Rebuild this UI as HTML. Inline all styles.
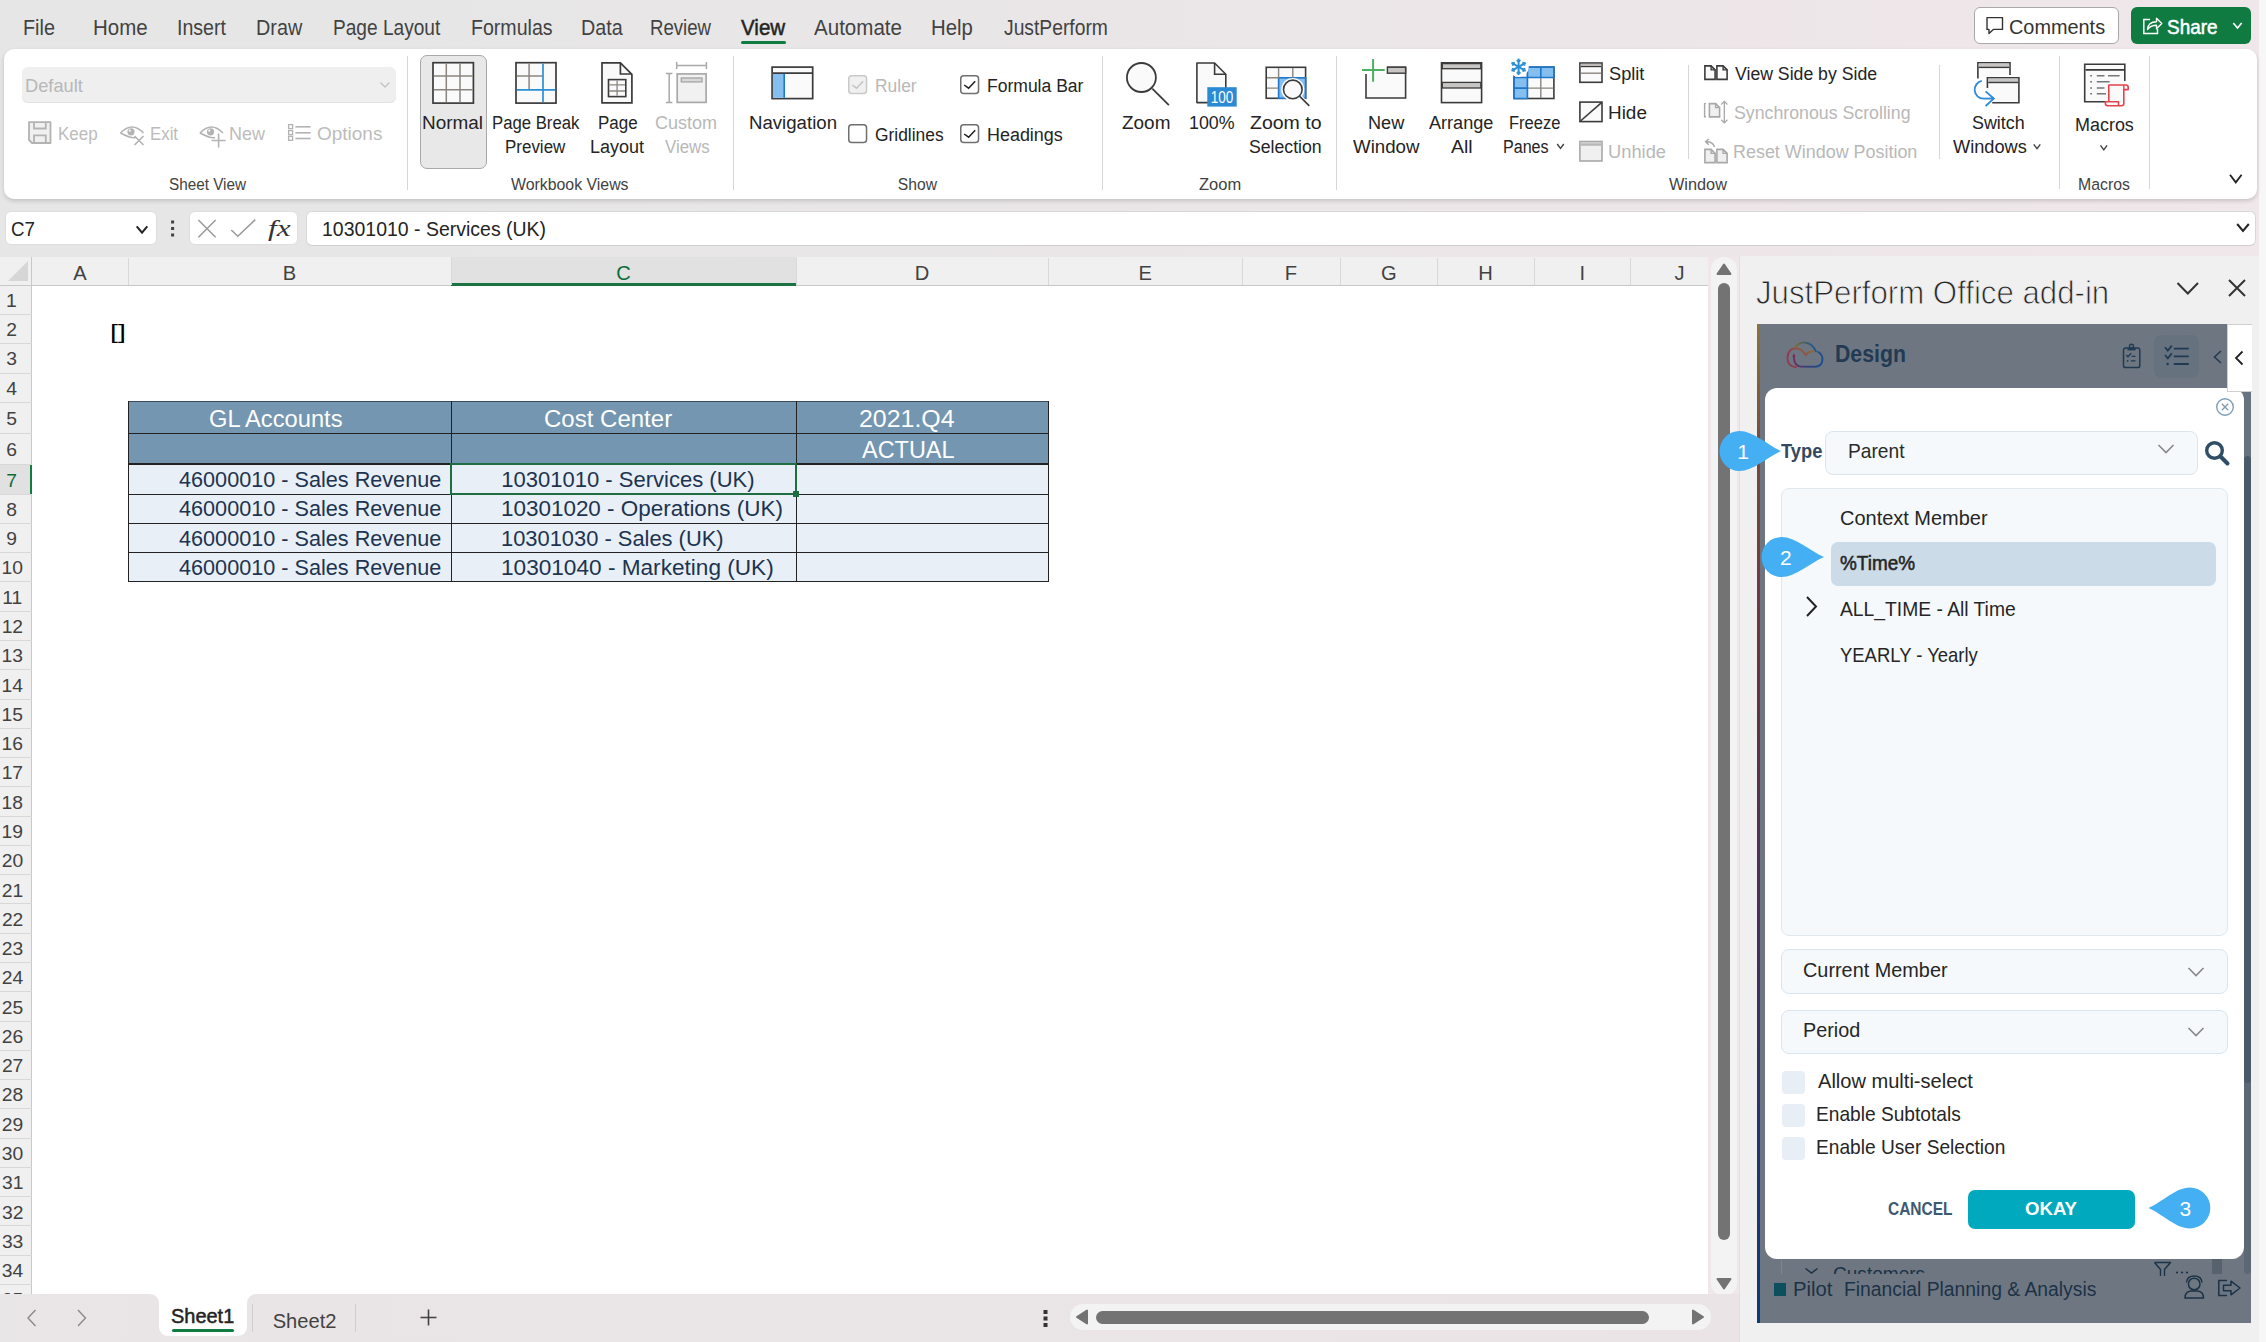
<!DOCTYPE html><html><head><meta charset="utf-8"><style>
*{margin:0;padding:0}
html,body{width:2266px;height:1342px;overflow:hidden;position:relative;font-family:'Liberation Sans',sans-serif}
.t{position:absolute;white-space:nowrap;transform-origin:0 0}
.r{position:absolute}
.s{position:absolute;overflow:visible}
</style></head><body><div class="r" style="left:0.00px;top:0.00px;width:2266.00px;height:1342.00px;background:linear-gradient(90deg,#e6e6e6 0%,#e8e6e7 35%,#ede6e9 70%,#efe7ea 100%)"></div>
<div class="r" style="left:2259.00px;top:0.00px;width:7.00px;height:1342.00px;background:#f7f7f7"></div>
<div class="t" style="left:23.42px;top:17.11px;font-size:21.16px;line-height:21.16px;color:#424242;transform:scaleX(0.9357);">File</div>
<div class="t" style="left:93.36px;top:17.11px;font-size:21.16px;line-height:21.16px;color:#424242;transform:scaleX(0.9675);">Home</div>
<div class="t" style="left:177.44px;top:17.11px;font-size:21.16px;line-height:21.16px;color:#424242;transform:scaleX(0.9256);">Insert</div>
<div class="t" style="left:256.41px;top:17.11px;font-size:21.16px;line-height:21.16px;color:#424242;transform:scaleX(0.9368);">Draw</div>
<div class="t" style="left:332.57px;top:17.11px;font-size:21.16px;line-height:21.16px;color:#424242;transform:scaleX(0.9025);">Page Layout</div>
<div class="t" style="left:470.63px;top:17.11px;font-size:21.16px;line-height:21.16px;color:#424242;transform:scaleX(0.9254);">Formulas</div>
<div class="t" style="left:580.52px;top:17.11px;font-size:21.16px;line-height:21.16px;color:#424242;transform:scaleX(0.9336);">Data</div>
<div class="t" style="left:650.41px;top:17.11px;font-size:21.16px;line-height:21.16px;color:#424242;transform:scaleX(0.8802);">Review</div>
<div class="t" style="left:814.40px;top:17.11px;font-size:21.16px;line-height:21.16px;color:#424242;transform:scaleX(0.9720);">Automate</div>
<div class="t" style="left:931.08px;top:17.11px;font-size:21.16px;line-height:21.16px;color:#424242;transform:scaleX(0.9599);">Help</div>
<div class="t" style="left:1003.91px;top:17.11px;font-size:21.16px;line-height:21.16px;color:#424242;transform:scaleX(0.9114);">JustPerform</div>
<div class="t" style="left:741.10px;top:17.11px;font-size:21.16px;line-height:21.16px;color:#242424;transform:scaleX(0.9716);-webkit-text-stroke:0.5px #242424">View</div>
<div class="r" style="left:741.00px;top:40.50px;width:45.00px;height:3.00px;background:#107c41;border-radius:2px"></div>
<div class="r" style="left:1973.50px;top:7.00px;width:145.00px;height:36.50px;background:#fff;border:1px solid #a9a9a9;border-radius:6px;box-sizing:border-box"></div>
<div class="t" style="left:2009.21px;top:16.50px;font-size:20.00px;line-height:20.00px;color:#333;transform:scaleX(0.9937);">Comments</div>
<div class="r" style="left:2130.80px;top:7.00px;width:119.90px;height:36.50px;background:#0f7b41;border-radius:6px"></div>
<div class="t" style="left:2166.65px;top:16.50px;font-size:20.00px;line-height:20.00px;color:#fff;transform:scaleX(0.9476);-webkit-text-stroke:0.5px #fff">Share</div>
<div class="r" style="left:3.70px;top:48.50px;width:2252.90px;height:150.50px;background:#fff;border-radius:10px;box-shadow:0 2px 4px rgba(0,0,0,0.16)"></div>
<div class="r" style="left:406.90px;top:56.00px;width:1.00px;height:133.60px;background:#d6d6d6"></div>
<div class="r" style="left:732.90px;top:56.00px;width:1.00px;height:133.60px;background:#d6d6d6"></div>
<div class="r" style="left:1102.10px;top:56.00px;width:1.00px;height:133.60px;background:#d6d6d6"></div>
<div class="r" style="left:1336.40px;top:56.00px;width:1.00px;height:133.60px;background:#d6d6d6"></div>
<div class="r" style="left:1688.00px;top:65.00px;width:1.00px;height:93.70px;background:#d6d6d6"></div>
<div class="r" style="left:1939.00px;top:65.00px;width:1.00px;height:93.80px;background:#d6d6d6"></div>
<div class="r" style="left:2059.00px;top:55.70px;width:1.00px;height:133.70px;background:#d6d6d6"></div>
<div class="r" style="left:2149.00px;top:55.70px;width:1.00px;height:133.70px;background:#d6d6d6"></div>
<div class="r" style="left:22.00px;top:67.00px;width:374.00px;height:35.50px;background:#efefef;border-radius:6px;box-shadow:inset 0 -1px 0 #e2e2e2"></div>
<div class="t" style="left:24.84px;top:76.99px;font-size:18.84px;line-height:18.84px;color:#b8b8b8;transform:scaleX(0.9685);">Default</div>
<div class="t" style="left:57.94px;top:125.19px;font-size:18.84px;line-height:18.84px;color:#bcbcbc;transform:scaleX(0.9010);">Keep</div>
<div class="t" style="left:149.65px;top:125.19px;font-size:18.84px;line-height:18.84px;color:#bcbcbc;transform:scaleX(0.8936);">Exit</div>
<div class="t" style="left:229.36px;top:125.19px;font-size:18.84px;line-height:18.84px;color:#bcbcbc;transform:scaleX(0.9540);">New</div>
<div class="t" style="left:317.05px;top:125.19px;font-size:18.84px;line-height:18.84px;color:#bcbcbc;transform:scaleX(1.0079);">Options</div>
<div class="t" style="left:169.31px;top:177.00px;font-size:15.65px;line-height:15.65px;color:#424242;transform:scaleX(0.9775);">Sheet View</div>
<div class="r" style="left:420.30px;top:54.80px;width:66.30px;height:114.70px;background:#e8e8e8;border:1px solid #a9a9a9;border-radius:7px;box-sizing:border-box"></div>
<div class="t" style="left:422.49px;top:114.06px;font-size:18.41px;line-height:18.41px;color:#242424;transform:scaleX(1.0283);">Normal</div>
<div class="t" style="left:491.96px;top:114.06px;font-size:18.41px;line-height:18.41px;color:#242424;transform:scaleX(0.9082);">Page Break</div>
<div class="t" style="left:505.44px;top:138.06px;font-size:18.41px;line-height:18.41px;color:#242424;transform:scaleX(0.9211);">Preview</div>
<div class="t" style="left:598.14px;top:114.06px;font-size:18.41px;line-height:18.41px;color:#242424;transform:scaleX(0.9219);">Page</div>
<div class="t" style="left:589.86px;top:138.06px;font-size:18.41px;line-height:18.41px;color:#242424;transform:scaleX(0.9785);">Layout</div>
<div class="t" style="left:654.90px;top:114.06px;font-size:18.41px;line-height:18.41px;color:#b8b8b8;transform:scaleX(0.9789);">Custom</div>
<div class="t" style="left:664.72px;top:138.06px;font-size:18.41px;line-height:18.41px;color:#b8b8b8;transform:scaleX(0.9159);">Views</div>
<div class="t" style="left:510.92px;top:177.20px;font-size:15.65px;line-height:15.65px;color:#424242;transform:scaleX(1.0142);">Workbook Views</div>
<div class="t" style="left:748.51px;top:113.86px;font-size:18.41px;line-height:18.41px;color:#242424;transform:scaleX(1.0119);">Navigation</div>
<div class="t" style="left:874.51px;top:77.06px;font-size:18.41px;line-height:18.41px;color:#b8b8b8;transform:scaleX(0.9466);">Ruler</div>
<div class="t" style="left:875.03px;top:125.66px;font-size:18.41px;line-height:18.41px;color:#242424;transform:scaleX(0.9445);">Gridlines</div>
<div class="t" style="left:986.90px;top:77.06px;font-size:18.41px;line-height:18.41px;color:#242424;transform:scaleX(0.9519);">Formula Bar</div>
<div class="t" style="left:986.87px;top:125.66px;font-size:18.41px;line-height:18.41px;color:#242424;transform:scaleX(0.9743);">Headings</div>
<div class="t" style="left:897.80px;top:177.00px;font-size:15.65px;line-height:15.65px;color:#424242;">Show</div>
<div class="t" style="left:1122.13px;top:113.66px;font-size:18.41px;line-height:18.41px;color:#242424;transform:scaleX(1.0293);">Zoom</div>
<div class="t" style="left:1188.96px;top:113.66px;font-size:18.41px;line-height:18.41px;color:#242424;transform:scaleX(0.9691);">100%</div>
<div class="t" style="left:1249.62px;top:113.66px;font-size:18.41px;line-height:18.41px;color:#242424;transform:scaleX(1.0594);">Zoom to</div>
<div class="t" style="left:1249.41px;top:137.66px;font-size:18.41px;line-height:18.41px;color:#242424;transform:scaleX(0.9591);">Selection</div>
<div class="t" style="left:1198.50px;top:177.00px;font-size:15.65px;line-height:15.65px;color:#424242;transform:scaleX(1.0549);">Zoom</div>
<div class="t" style="left:1367.55px;top:113.66px;font-size:18.41px;line-height:18.41px;color:#242424;transform:scaleX(0.9850);">New</div>
<div class="t" style="left:1352.61px;top:137.66px;font-size:18.41px;line-height:18.41px;color:#242424;transform:scaleX(1.0148);">Window</div>
<div class="t" style="left:1429.30px;top:113.66px;font-size:18.41px;line-height:18.41px;color:#242424;transform:scaleX(0.9829);">Arrange</div>
<div class="t" style="left:1451.20px;top:137.66px;font-size:18.41px;line-height:18.41px;color:#242424;transform:scaleX(1.0554);">All</div>
<div class="t" style="left:1508.68px;top:113.66px;font-size:18.41px;line-height:18.41px;color:#242424;transform:scaleX(0.8991);">Freeze</div>
<div class="t" style="left:1502.91px;top:137.66px;font-size:18.41px;line-height:18.41px;color:#242424;transform:scaleX(0.8729);">Panes</div>
<div class="t" style="left:1608.98px;top:64.56px;font-size:18.41px;line-height:18.41px;color:#242424;transform:scaleX(0.9891);">Split</div>
<div class="t" style="left:1608.29px;top:104.16px;font-size:18.41px;line-height:18.41px;color:#242424;transform:scaleX(1.0275);">Hide</div>
<div class="t" style="left:1608.43px;top:142.76px;font-size:18.41px;line-height:18.41px;color:#b8b8b8;transform:scaleX(0.9940);">Unhide</div>
<div class="t" style="left:1734.51px;top:64.56px;font-size:18.41px;line-height:18.41px;color:#242424;transform:scaleX(0.9595);">View Side by Side</div>
<div class="t" style="left:1733.80px;top:104.16px;font-size:18.41px;line-height:18.41px;color:#b8b8b8;transform:scaleX(0.9640);">Synchronous Scrolling</div>
<div class="t" style="left:1733.17px;top:142.76px;font-size:18.41px;line-height:18.41px;color:#b8b8b8;transform:scaleX(0.9740);">Reset Window Position</div>
<div class="t" style="left:1668.52px;top:177.00px;font-size:15.65px;line-height:15.65px;color:#424242;transform:scaleX(1.0406);">Window</div>
<div class="t" style="left:1972.00px;top:114.06px;font-size:18.41px;line-height:18.41px;color:#242424;transform:scaleX(0.9716);">Switch</div>
<div class="t" style="left:1952.81px;top:137.76px;font-size:18.41px;line-height:18.41px;color:#242424;transform:scaleX(0.9878);">Windows</div>
<div class="t" style="left:2074.86px;top:115.66px;font-size:18.41px;line-height:18.41px;color:#242424;transform:scaleX(0.9750);">Macros</div>
<div class="t" style="left:2077.63px;top:176.80px;font-size:15.65px;line-height:15.65px;color:#424242;transform:scaleX(1.0113);">Macros</div>
<div class="r" style="left:4.80px;top:211.40px;width:151.90px;height:33.90px;background:#fff;border:1px solid #dedede;border-radius:6px;box-sizing:border-box"></div>
<div class="t" style="left:10.96px;top:219.82px;font-size:19.86px;line-height:19.86px;color:#242424;transform:scaleX(0.9430);">C7</div>
<div class="r" style="left:188.50px;top:211.40px;width:109.40px;height:33.90px;background:#fff;border:1px solid #dedede;border-radius:6px;box-sizing:border-box"></div>
<div class="r" style="left:305.80px;top:211.30px;width:1950.60px;height:34.30px;background:#fff;border:1px solid #d8d8d8;border-bottom-color:#cfcfcf;border-radius:6px;box-sizing:border-box"></div>
<div class="t" style="left:322.04px;top:219.82px;font-size:19.86px;line-height:19.86px;color:#242424;transform:scaleX(0.9807);">10301010 - Services (UK)</div>
<div class="r" style="left:0.00px;top:256.50px;width:1708.40px;height:29.00px;background:#f0f0f0"></div>
<div class="r" style="left:0.00px;top:285.00px;width:1708.40px;height:1.00px;background:#c8c8c8"></div>
<div class="r" style="left:0.00px;top:285.50px;width:31.60px;height:1008.50px;background:#f0f0f0"></div>
<div class="r" style="left:31.60px;top:286.00px;width:1676.80px;height:1008.00px;background:#fff"></div>
<div class="r" style="left:31.00px;top:256.50px;width:1.00px;height:1037.50px;background:#c8c8c8"></div>
<div class="r" style="left:451.10px;top:256.50px;width:345.00px;height:29.00px;background:#e1e1e1"></div>
<div class="r" style="left:451.10px;top:283.40px;width:345.00px;height:2.30px;background:#1b7343"></div>
<div class="r" style="left:127.90px;top:258.00px;width:1.00px;height:27.00px;background:#d8d8d8"></div>
<div class="r" style="left:450.60px;top:258.00px;width:1.00px;height:27.00px;background:#d8d8d8"></div>
<div class="r" style="left:795.60px;top:258.00px;width:1.00px;height:27.00px;background:#d8d8d8"></div>
<div class="r" style="left:1048.10px;top:258.00px;width:1.00px;height:27.00px;background:#d8d8d8"></div>
<div class="r" style="left:1242.30px;top:258.00px;width:1.00px;height:27.00px;background:#d8d8d8"></div>
<div class="r" style="left:1339.50px;top:258.00px;width:1.00px;height:27.00px;background:#d8d8d8"></div>
<div class="r" style="left:1436.50px;top:258.00px;width:1.00px;height:27.00px;background:#d8d8d8"></div>
<div class="r" style="left:1533.50px;top:258.00px;width:1.00px;height:27.00px;background:#d8d8d8"></div>
<div class="r" style="left:1630.10px;top:258.00px;width:1.00px;height:27.00px;background:#d8d8d8"></div>
<div class="t" style="left:73.30px;top:263.28px;font-size:20.14px;line-height:20.14px;color:#424242;">A</div>
<div class="t" style="left:282.75px;top:263.28px;font-size:20.14px;line-height:20.14px;color:#424242;">B</div>
<div class="t" style="left:616.20px;top:263.28px;font-size:20.14px;line-height:20.14px;color:#0e6b38;">C</div>
<div class="t" style="left:914.75px;top:263.28px;font-size:20.14px;line-height:20.14px;color:#424242;">D</div>
<div class="t" style="left:1138.60px;top:263.28px;font-size:20.14px;line-height:20.14px;color:#424242;">E</div>
<div class="t" style="left:1284.85px;top:263.28px;font-size:20.14px;line-height:20.14px;color:#424242;">F</div>
<div class="t" style="left:1380.90px;top:263.28px;font-size:20.14px;line-height:20.14px;color:#424242;">G</div>
<div class="t" style="left:1478.25px;top:263.28px;font-size:20.14px;line-height:20.14px;color:#424242;">H</div>
<div class="t" style="left:1579.53px;top:263.28px;font-size:20.14px;line-height:20.14px;color:#424242;">I</div>
<div class="t" style="left:1674.57px;top:263.28px;font-size:20.14px;line-height:20.14px;color:#424242;">J</div>
<svg class="s" style="left:8.00px;top:261.00px;" width="21" height="21" viewBox="0 0 21 21"><path d="M20 0 L20 20 L0 20 Z" fill="#d6d6d6"/></svg>
<div class="r" style="left:0.00px;top:464.40px;width:31.60px;height:29.80px;background:#e1e1e1"></div>
<div class="r" style="left:29.60px;top:464.40px;width:2.20px;height:29.80px;background:#107c41"></div>
<div class="r" style="left:0.00px;top:314.20px;width:31.60px;height:1.00px;background:#d8d8d8"></div>
<div class="r" style="left:0.00px;top:342.80px;width:31.60px;height:1.00px;background:#d8d8d8"></div>
<div class="r" style="left:0.00px;top:372.70px;width:31.60px;height:1.00px;background:#d8d8d8"></div>
<div class="r" style="left:0.00px;top:402.30px;width:31.60px;height:1.00px;background:#d8d8d8"></div>
<div class="r" style="left:0.00px;top:433.00px;width:31.60px;height:1.00px;background:#d8d8d8"></div>
<div class="r" style="left:0.00px;top:463.90px;width:31.60px;height:1.00px;background:#d8d8d8"></div>
<div class="r" style="left:0.00px;top:493.70px;width:31.60px;height:1.00px;background:#d8d8d8"></div>
<div class="r" style="left:0.00px;top:522.90px;width:31.60px;height:1.00px;background:#d8d8d8"></div>
<div class="r" style="left:0.00px;top:552.10px;width:31.60px;height:1.00px;background:#d8d8d8"></div>
<div class="r" style="left:0.00px;top:581.40px;width:31.60px;height:1.00px;background:#d8d8d8"></div>
<div class="r" style="left:0.00px;top:610.67px;width:31.60px;height:1.00px;background:#d8d8d8"></div>
<div class="r" style="left:0.00px;top:639.95px;width:31.60px;height:1.00px;background:#d8d8d8"></div>
<div class="r" style="left:0.00px;top:669.22px;width:31.60px;height:1.00px;background:#d8d8d8"></div>
<div class="r" style="left:0.00px;top:698.50px;width:31.60px;height:1.00px;background:#d8d8d8"></div>
<div class="r" style="left:0.00px;top:727.77px;width:31.60px;height:1.00px;background:#d8d8d8"></div>
<div class="r" style="left:0.00px;top:757.05px;width:31.60px;height:1.00px;background:#d8d8d8"></div>
<div class="r" style="left:0.00px;top:786.32px;width:31.60px;height:1.00px;background:#d8d8d8"></div>
<div class="r" style="left:0.00px;top:815.60px;width:31.60px;height:1.00px;background:#d8d8d8"></div>
<div class="r" style="left:0.00px;top:844.87px;width:31.60px;height:1.00px;background:#d8d8d8"></div>
<div class="r" style="left:0.00px;top:874.15px;width:31.60px;height:1.00px;background:#d8d8d8"></div>
<div class="r" style="left:0.00px;top:903.42px;width:31.60px;height:1.00px;background:#d8d8d8"></div>
<div class="r" style="left:0.00px;top:932.70px;width:31.60px;height:1.00px;background:#d8d8d8"></div>
<div class="r" style="left:0.00px;top:961.97px;width:31.60px;height:1.00px;background:#d8d8d8"></div>
<div class="r" style="left:0.00px;top:991.25px;width:31.60px;height:1.00px;background:#d8d8d8"></div>
<div class="r" style="left:0.00px;top:1020.52px;width:31.60px;height:1.00px;background:#d8d8d8"></div>
<div class="r" style="left:0.00px;top:1049.80px;width:31.60px;height:1.00px;background:#d8d8d8"></div>
<div class="r" style="left:0.00px;top:1079.07px;width:31.60px;height:1.00px;background:#d8d8d8"></div>
<div class="r" style="left:0.00px;top:1108.35px;width:31.60px;height:1.00px;background:#d8d8d8"></div>
<div class="r" style="left:0.00px;top:1137.62px;width:31.60px;height:1.00px;background:#d8d8d8"></div>
<div class="r" style="left:0.00px;top:1166.90px;width:31.60px;height:1.00px;background:#d8d8d8"></div>
<div class="r" style="left:0.00px;top:1196.18px;width:31.60px;height:1.00px;background:#d8d8d8"></div>
<div class="r" style="left:0.00px;top:1225.45px;width:31.60px;height:1.00px;background:#d8d8d8"></div>
<div class="r" style="left:0.00px;top:1254.73px;width:31.60px;height:1.00px;background:#d8d8d8"></div>
<div class="r" style="left:0.00px;top:1284.00px;width:31.60px;height:1.00px;background:#d8d8d8"></div>
<div class="t" style="left:5.96px;top:291.32px;font-size:19.28px;line-height:19.28px;color:#424242;">1</div>
<div class="t" style="left:6.25px;top:320.22px;font-size:19.28px;line-height:19.28px;color:#424242;">2</div>
<div class="t" style="left:6.25px;top:349.47px;font-size:19.28px;line-height:19.28px;color:#424242;">3</div>
<div class="t" style="left:6.35px;top:379.22px;font-size:19.28px;line-height:19.28px;color:#424242;">4</div>
<div class="t" style="left:6.25px;top:409.37px;font-size:19.28px;line-height:19.28px;color:#424242;">5</div>
<div class="t" style="left:6.15px;top:440.17px;font-size:19.28px;line-height:19.28px;color:#424242;">6</div>
<div class="t" style="left:6.25px;top:470.52px;font-size:19.28px;line-height:19.28px;color:#0e6b38;">7</div>
<div class="t" style="left:6.20px;top:500.02px;font-size:19.28px;line-height:19.28px;color:#424242;">8</div>
<div class="t" style="left:6.25px;top:529.22px;font-size:19.28px;line-height:19.28px;color:#424242;">9</div>
<div class="t" style="left:1.52px;top:558.47px;font-size:19.28px;line-height:19.28px;color:#424242;">10</div>
<div class="t" style="left:2.34px;top:587.75px;font-size:19.28px;line-height:19.28px;color:#424242;">11</div>
<div class="t" style="left:1.66px;top:617.03px;font-size:19.28px;line-height:19.28px;color:#424242;">12</div>
<div class="t" style="left:1.56px;top:646.30px;font-size:19.28px;line-height:19.28px;color:#424242;">13</div>
<div class="t" style="left:1.47px;top:675.58px;font-size:19.28px;line-height:19.28px;color:#424242;">14</div>
<div class="t" style="left:1.56px;top:704.85px;font-size:19.28px;line-height:19.28px;color:#424242;">15</div>
<div class="t" style="left:1.56px;top:734.13px;font-size:19.28px;line-height:19.28px;color:#424242;">16</div>
<div class="t" style="left:1.66px;top:763.40px;font-size:19.28px;line-height:19.28px;color:#424242;">17</div>
<div class="t" style="left:1.56px;top:792.68px;font-size:19.28px;line-height:19.28px;color:#424242;">18</div>
<div class="t" style="left:1.61px;top:821.95px;font-size:19.28px;line-height:19.28px;color:#424242;">19</div>
<div class="t" style="left:1.76px;top:851.23px;font-size:19.28px;line-height:19.28px;color:#424242;">20</div>
<div class="t" style="left:1.85px;top:880.50px;font-size:19.28px;line-height:19.28px;color:#424242;">21</div>
<div class="t" style="left:1.90px;top:909.78px;font-size:19.28px;line-height:19.28px;color:#424242;">22</div>
<div class="t" style="left:1.81px;top:939.05px;font-size:19.28px;line-height:19.28px;color:#424242;">23</div>
<div class="t" style="left:1.71px;top:968.33px;font-size:19.28px;line-height:19.28px;color:#424242;">24</div>
<div class="t" style="left:1.81px;top:997.60px;font-size:19.28px;line-height:19.28px;color:#424242;">25</div>
<div class="t" style="left:1.81px;top:1026.88px;font-size:19.28px;line-height:19.28px;color:#424242;">26</div>
<div class="t" style="left:1.90px;top:1056.15px;font-size:19.28px;line-height:19.28px;color:#424242;">27</div>
<div class="t" style="left:1.81px;top:1085.43px;font-size:19.28px;line-height:19.28px;color:#424242;">28</div>
<div class="t" style="left:1.85px;top:1114.70px;font-size:19.28px;line-height:19.28px;color:#424242;">29</div>
<div class="t" style="left:1.85px;top:1143.98px;font-size:19.28px;line-height:19.28px;color:#424242;">30</div>
<div class="t" style="left:1.95px;top:1173.25px;font-size:19.28px;line-height:19.28px;color:#424242;">31</div>
<div class="t" style="left:2.00px;top:1202.53px;font-size:19.28px;line-height:19.28px;color:#424242;">32</div>
<div class="t" style="left:1.90px;top:1231.80px;font-size:19.28px;line-height:19.28px;color:#424242;">33</div>
<div class="t" style="left:1.81px;top:1261.08px;font-size:19.28px;line-height:19.28px;color:#424242;">34</div>
<div class="t" style="left:1.90px;top:1290.35px;font-size:19.28px;line-height:19.28px;color:#424242;">35</div>
<div class="t" style="left:109.81px;top:322.97px;font-size:19.57px;line-height:19.57px;color:#000;transform:scaleX(1.4533);">[]</div>
<div class="r" style="left:128.30px;top:401.80px;width:920.30px;height:62.60px;background:#7496b0"></div>
<div class="r" style="left:128.30px;top:464.40px;width:920.30px;height:117.40px;background:#e9eff7"></div>
<div class="r" style="left:127.70px;top:401.20px;width:921.50px;height:1.20px;background:#3a4a58"></div>
<div class="r" style="left:127.70px;top:433.00px;width:921.50px;height:1.20px;background:#222"></div>
<div class="r" style="left:127.70px;top:463.40px;width:921.50px;height:2.00px;background:#222"></div>
<div class="r" style="left:127.70px;top:493.50px;width:921.50px;height:1.20px;background:#222"></div>
<div class="r" style="left:127.70px;top:522.70px;width:921.50px;height:1.20px;background:#222"></div>
<div class="r" style="left:127.70px;top:551.90px;width:921.50px;height:1.20px;background:#222"></div>
<div class="r" style="left:127.70px;top:581.20px;width:921.50px;height:1.20px;background:#222"></div>
<div class="r" style="left:127.70px;top:401.20px;width:1.20px;height:181.20px;background:#222"></div>
<div class="r" style="left:450.50px;top:401.20px;width:1.20px;height:181.20px;background:#222"></div>
<div class="r" style="left:795.50px;top:401.20px;width:1.20px;height:181.20px;background:#222"></div>
<div class="r" style="left:1048.00px;top:401.20px;width:1.20px;height:181.20px;background:#222"></div>
<div class="t" style="left:208.51px;top:406.80px;font-size:24.35px;line-height:24.35px;color:#fff;transform:scaleX(0.9739);">GL Accounts</div>
<div class="t" style="left:544.10px;top:406.90px;font-size:24.35px;line-height:24.35px;color:#fff;transform:scaleX(0.9866);">Cost Center</div>
<div class="t" style="left:859.45px;top:406.90px;font-size:24.35px;line-height:24.35px;color:#fff;transform:scaleX(1.0238);">2021.Q4</div>
<div class="t" style="left:861.60px;top:437.80px;font-size:24.35px;line-height:24.35px;color:#fff;transform:scaleX(0.9631);">ACTUAL</div>
<div class="t" style="left:178.87px;top:469.28px;font-size:22.03px;line-height:22.03px;color:#1d3450;transform:scaleX(0.9828);">46000010 - Sales Revenue</div>
<div class="t" style="left:501.25px;top:469.28px;font-size:22.03px;line-height:22.03px;color:#1d3450;">10301010 - Services (UK)</div>
<div class="t" style="left:178.87px;top:498.48px;font-size:22.03px;line-height:22.03px;color:#1d3450;transform:scaleX(0.9828);">46000010 - Sales Revenue</div>
<div class="t" style="left:501.22px;top:498.48px;font-size:22.03px;line-height:22.03px;color:#1d3450;transform:scaleX(1.0193);">10301020 - Operations (UK)</div>
<div class="t" style="left:178.87px;top:527.78px;font-size:22.03px;line-height:22.03px;color:#1d3450;transform:scaleX(0.9828);">46000010 - Sales Revenue</div>
<div class="t" style="left:501.26px;top:527.78px;font-size:22.03px;line-height:22.03px;color:#1d3450;transform:scaleX(0.9938);">10301030 - Sales (UK)</div>
<div class="t" style="left:178.87px;top:556.98px;font-size:22.03px;line-height:22.03px;color:#1d3450;transform:scaleX(0.9828);">46000010 - Sales Revenue</div>
<div class="t" style="left:501.20px;top:556.98px;font-size:22.03px;line-height:22.03px;color:#1d3450;transform:scaleX(1.0270);">10301040 - Marketing (UK)</div>
<div class="r" style="left:450.20px;top:463.20px;width:347.00px;height:32.20px;border:2.2px solid #1e6e41;box-sizing:border-box"></div>
<div class="r" style="left:793.20px;top:491.00px;width:5.60px;height:5.60px;background:#1e6e41"></div>
<div class="r" style="left:1708.40px;top:256.50px;width:31.60px;height:1039.50px;background:#efe7ea"></div>
<div class="r" style="left:1711.20px;top:256.50px;width:25.50px;height:1039.50px;background:#f3f3f3;border-radius:13px"></div>
<div class="r" style="left:1718.20px;top:283.10px;width:12.00px;height:956.90px;background:#737373;border-radius:6px"></div>
<svg class="s" style="left:1715.00px;top:263.00px;" width="18" height="13" viewBox="0 0 18 13"><path d="M9 1.5 L15.5 11 L2.5 11 Z" fill="#737373" stroke="#737373" stroke-width="2" stroke-linejoin="round"/></svg>
<svg class="s" style="left:1715.00px;top:1277.00px;" width="18" height="13" viewBox="0 0 18 13"><path d="M9 11.5 L15.5 2 L2.5 2 Z" fill="#737373" stroke="#737373" stroke-width="2" stroke-linejoin="round"/></svg>
<div class="r" style="left:0.00px;top:1294.00px;width:1740.00px;height:48.00px;background:linear-gradient(90deg,#e9e6e7,#ebe4e7)"></div>
<div class="r" style="left:150.00px;top:1286.00px;width:106.00px;height:18.00px;background:#fff"></div>
<div class="r" style="left:0.00px;top:1294.00px;width:159.00px;height:48.00px;background:linear-gradient(90deg,#e9e6e7,#e9e5e6);border-top-right-radius:9px"></div>
<div class="r" style="left:247.00px;top:1294.00px;width:1493.00px;height:48.00px;background:linear-gradient(90deg,#e9e5e6,#ebe4e7);border-top-left-radius:9px"></div>
<div class="r" style="left:159.00px;top:1286.00px;width:88.00px;height:50.00px;background:#fff;border-radius:0 0 9px 9px"></div>
<div class="r" style="left:171.70px;top:1329.30px;width:62.20px;height:3.00px;background:#107c41;border-radius:1.5px"></div>
<div class="t" style="left:171.10px;top:1305.58px;font-size:20.14px;line-height:20.14px;color:#242424;transform:scaleX(0.9912);-webkit-text-stroke:0.5px #242424">Sheet1</div>
<div class="t" style="left:272.70px;top:1310.58px;font-size:20.14px;line-height:20.14px;color:#424242;">Sheet2</div>
<div class="r" style="left:252.30px;top:1304.00px;width:1.00px;height:28.00px;background:#cfcfcf"></div>
<div class="r" style="left:355.20px;top:1304.00px;width:1.00px;height:28.00px;background:#cfcfcf"></div>
<svg class="s" style="left:420.00px;top:1309.00px;" width="17" height="17" viewBox="0 0 17 17"><path d="M8.5 0.5 V16.5 M0.5 8.5 H16.5" stroke="#424242" stroke-width="1.6"/></svg>
<svg class="s" style="left:26.00px;top:1309.00px;" width="12" height="18" viewBox="0 0 12 18"><path d="M9.5 1 L2 9 L9.5 17" fill="none" stroke="#8a8a8a" stroke-width="1.4"/></svg>
<svg class="s" style="left:76.00px;top:1309.00px;" width="12" height="18" viewBox="0 0 12 18"><path d="M2 1 L9.5 9 L2 17" fill="none" stroke="#8a8a8a" stroke-width="1.4"/></svg>
<svg class="s" style="left:1042.00px;top:1309.00px;" width="8" height="20" viewBox="0 0 8 20"><rect x="1.5" y="1" width="4" height="4" fill="#333"/><rect x="1.5" y="7.5" width="4" height="4" fill="#333"/><rect x="1.5" y="14" width="4" height="4" fill="#333"/></svg>
<div class="r" style="left:1069.60px;top:1304.00px;width:641.10px;height:26.20px;background:#f3f3f3;border-radius:13px"></div>
<div class="r" style="left:1095.80px;top:1310.60px;width:552.90px;height:13.10px;background:#737373;border-radius:7px"></div>
<svg class="s" style="left:1075.00px;top:1308.00px;" width="14" height="18" viewBox="0 0 14 18"><path d="M2 9 L12 2.5 L12 15.5 Z" fill="#737373" stroke="#737373" stroke-width="2" stroke-linejoin="round"/></svg>
<svg class="s" style="left:1691.00px;top:1308.00px;" width="14" height="18" viewBox="0 0 14 18"><path d="M12 9 L2 2.5 L2 15.5 Z" fill="#737373" stroke="#737373" stroke-width="2" stroke-linejoin="round"/></svg>
<div class="r" style="left:1740.00px;top:256.00px;width:519.00px;height:1086.00px;background:#f0f0f0"></div>
<div class="r" style="left:1738.50px;top:256.00px;width:1.00px;height:1086.00px;background:#e6dde0"></div>
<div class="t" style="left:1755.83px;top:276.27px;font-size:33.33px;line-height:33.33px;color:#262626;transform:scaleX(0.9363);-webkit-text-stroke:0.9px #f0f0f0">JustPerform Office add-in</div>
<svg class="s" style="left:2176.00px;top:281.00px;" width="24" height="15" viewBox="0 0 24 15"><path d="M1.5 2 L11.8 12.5 L22 2" fill="none" stroke="#333" stroke-width="2"/></svg>
<svg class="s" style="left:2228.00px;top:279.00px;" width="18" height="18" viewBox="0 0 18 18"><path d="M1 1 L17 17 M17 1 L1 17" fill="none" stroke="#333" stroke-width="2"/></svg>
<div class="r" style="left:1757.20px;top:324.10px;width:494.00px;height:999.00px;background:#6e7781"></div>
<div class="r" style="left:1757.20px;top:324.10px;width:3.30px;height:999.00px;background:linear-gradient(180deg,#8a7437 0%,#7a4a3a 12%,#6e3040 35%,#4a2f5a 60%,#1f3670 85%,#0b3a7a 100%)"></div>
<div class="r" style="left:2227.10px;top:324.00px;width:24.50px;height:68.20px;background:#fff;border:1px solid #d0d0d0;border-right:none;box-sizing:border-box"></div>
<svg class="s" style="left:2233.00px;top:350.00px;" width="12" height="16" viewBox="0 0 12 16"><path d="M9.5 1.5 L3 8 L9.5 14.5" fill="none" stroke="#222" stroke-width="1.8"/></svg>
<div class="r" style="left:2154.30px;top:334.80px;width:44.90px;height:42.90px;background:#66727d;border-radius:8px"></div>
<svg class="s" style="left:2212.00px;top:349.00px;" width="11" height="16" viewBox="0 0 11 16"><path d="M9 2 L2.5 8 L9 14" fill="none" stroke="#243a50" stroke-width="1.6"/></svg>
<div class="t" style="left:1834.52px;top:342.20px;font-size:24.35px;line-height:24.35px;color:#223a54;font-weight:bold;transform:scaleX(0.8739);">Design</div>
<div class="r" style="left:2244.00px;top:392.00px;width:7.00px;height:881.50px;background:#5c6975;border-radius:0 0 4px 4px"></div>
<div class="r" style="left:2244.00px;top:392.00px;width:7.00px;height:78.00px;background:#67737e"></div>
<div class="r" style="left:2244.00px;top:456.00px;width:7.00px;height:626.50px;background:#4b5a68;border-radius:4px"></div>
<div class="r" style="left:1765.00px;top:1259.00px;width:479.00px;height:16.00px;background:#6e7781"></div>
<div class="t" style="left:1792.87px;top:1278.86px;font-size:20.87px;line-height:20.87px;color:#1c3247;transform:scaleX(0.9738);">Pilot</div>
<div class="t" style="left:1843.95px;top:1279.11px;font-size:20.58px;line-height:20.58px;color:#1c3247;transform:scaleX(0.9388);">Financial Planning &amp; Analysis</div>
<div class="r" style="left:1773.70px;top:1283.00px;width:12.50px;height:13.00px;background:#0d4f5e"></div>
<div class="r" style="left:1765.30px;top:387.60px;width:478.50px;height:871.40px;background:#fff;border-radius:12px"></div>
<div class="r" style="left:2196.00px;top:387.60px;width:47.80px;height:4.60px;background:transparent"></div>
<div class="r" style="left:2227.10px;top:324.00px;width:24.50px;height:68.20px;background:#fff;border:1px solid #d0d0d0;border-right:none;box-sizing:border-box"></div>
<svg class="s" style="left:2233.00px;top:350.00px;" width="12" height="16" viewBox="0 0 12 16"><path d="M9.5 1.5 L3 8 L9.5 14.5" fill="none" stroke="#222" stroke-width="1.8"/></svg>
<svg class="s" style="left:2215.00px;top:397.00px;" width="20" height="20" viewBox="0 0 20 20"><circle cx="10" cy="10" r="8.3" fill="none" stroke="#7f9db3" stroke-width="1.4"/><path d="M6.8 6.8 L13.2 13.2 M13.2 6.8 L6.8 13.2" stroke="#7f9db3" stroke-width="1.4"/></svg>
<div class="t" style="left:1780.82px;top:441.75px;font-size:19.71px;line-height:19.71px;color:#34495e;font-weight:bold;transform:scaleX(0.9300);">Type</div>
<div class="r" style="left:1825.20px;top:430.50px;width:372.80px;height:44.20px;background:#f5f9fc;border:1px solid #dbe5ee;border-radius:8px;box-sizing:border-box"></div>
<div class="t" style="left:1847.96px;top:441.38px;font-size:20.14px;line-height:20.14px;color:#2b2b2b;transform:scaleX(0.9529);">Parent</div>
<svg class="s" style="left:2157.00px;top:443.00px;" width="18" height="12" viewBox="0 0 18 12"><path d="M1.5 2 L9 9.5 L16.5 2" fill="none" stroke="#888" stroke-width="1.6"/></svg>
<svg class="s" style="left:2203.00px;top:439.00px;" width="28" height="28" viewBox="0 0 28 28"><circle cx="11.5" cy="11.5" r="7.8" fill="none" stroke="#2f4d67" stroke-width="3.4"/><path d="M17.5 17.5 L24.5 24.5" stroke="#2f4d67" stroke-width="4" stroke-linecap="round"/></svg>
<div class="r" style="left:1780.80px;top:487.80px;width:447.60px;height:448.40px;background:#f5f9fc;border:1px solid #e0e8ef;border-radius:8px;box-sizing:border-box"></div>
<div class="t" style="left:1839.70px;top:508.08px;font-size:20.14px;line-height:20.14px;color:#262626;transform:scaleX(0.9921);">Context Member</div>
<div class="r" style="left:1831.20px;top:541.50px;width:384.80px;height:44.30px;background:#cbdbe8;border-radius:7px"></div>
<div class="t" style="left:1840.04px;top:553.38px;font-size:20.14px;line-height:20.14px;color:#262626;transform:scaleX(0.9418);-webkit-text-stroke:0.55px #262626">%Time%</div>
<svg class="s" style="left:1804.00px;top:595.00px;" width="16" height="24" viewBox="0 0 16 24"><path d="M3 2 L12 11.5 L3 21" fill="none" stroke="#222" stroke-width="2"/></svg>
<div class="t" style="left:1840.20px;top:599.08px;font-size:20.14px;line-height:20.14px;color:#262626;transform:scaleX(0.9578);">ALL_TIME - All Time</div>
<div class="t" style="left:1839.74px;top:645.38px;font-size:20.14px;line-height:20.14px;color:#262626;transform:scaleX(0.9168);">YEARLY - Yearly</div>
<div class="r" style="left:1780.80px;top:949.40px;width:447.60px;height:44.40px;background:#f5f9fc;border:1px solid #dbe5ee;border-radius:8px;box-sizing:border-box"></div>
<div class="t" style="left:1803.31px;top:960.28px;font-size:20.14px;line-height:20.14px;color:#262626;transform:scaleX(0.9866);">Current Member</div>
<svg class="s" style="left:2187.00px;top:965.60px;" width="18" height="12" viewBox="0 0 18 12"><path d="M1.5 2 L9 9.5 L16.5 2" fill="none" stroke="#888" stroke-width="1.6"/></svg>
<div class="r" style="left:1780.80px;top:1009.60px;width:447.60px;height:44.50px;background:#f5f9fc;border:1px solid #dbe5ee;border-radius:8px;box-sizing:border-box"></div>
<div class="t" style="left:1802.71px;top:1020.48px;font-size:20.14px;line-height:20.14px;color:#262626;transform:scaleX(0.9838);">Period</div>
<svg class="s" style="left:2187.00px;top:1025.85px;" width="18" height="12" viewBox="0 0 18 12"><path d="M1.5 2 L9 9.5 L16.5 2" fill="none" stroke="#888" stroke-width="1.6"/></svg>
<div class="r" style="left:1782.00px;top:1070.60px;width:23.30px;height:23.00px;background:#e7eef6;border-radius:4px"></div>
<div class="t" style="left:1817.50px;top:1071.15px;font-size:20.29px;line-height:20.29px;color:#262626;transform:scaleX(0.9889);">Allow multi-select</div>
<div class="r" style="left:1782.00px;top:1103.50px;width:23.30px;height:23.00px;background:#e7eef6;border-radius:4px"></div>
<div class="t" style="left:1815.97px;top:1103.75px;font-size:20.29px;line-height:20.29px;color:#262626;transform:scaleX(0.9440);">Enable Subtotals</div>
<div class="r" style="left:1782.00px;top:1137.00px;width:23.30px;height:23.00px;background:#e7eef6;border-radius:4px"></div>
<div class="t" style="left:1815.97px;top:1137.05px;font-size:20.29px;line-height:20.29px;color:#262626;transform:scaleX(0.9438);">Enable User Selection</div>
<div class="t" style="left:1888.38px;top:1198.94px;font-size:19.13px;line-height:19.13px;color:#3d5a73;font-weight:bold;transform:scaleX(0.8106);">CANCEL</div>
<div class="r" style="left:1968.30px;top:1190.40px;width:166.30px;height:38.90px;background:#00a9bd;border-radius:7px"></div>
<div class="t" style="left:2025.26px;top:1198.94px;font-size:19.13px;line-height:19.13px;color:#fff;font-weight:bold;transform:scaleX(0.9730);">OKAY</div>
<svg class="s" style="left:0.00px;top:0.00px;pointer-events:none" width="2266" height="1342" viewBox="0 0 2266 1342"><path d="M1739.5 431.1 C1753.5 431.1 1767.1 445.1 1781.1 451.1 C1767.1 457.1 1753.5 471.1 1739.5 471.1 A20 20 0 0 1 1739.5 431.1 Z" fill="#45aff4"/></svg>
<div class="t" style="left:1737.35px;top:441.44px;font-size:21.01px;line-height:21.01px;color:#fff;">1</div>
<svg class="s" style="left:0.00px;top:0.00px;pointer-events:none" width="2266" height="1342" viewBox="0 0 2266 1342"><path d="M1781.5 537.1 C1795.5 537.1 1810 551.1 1824 557.1 C1810 563.1 1795.5 577.1 1781.5 577.1 A20 20 0 0 1 1781.5 537.1 Z" fill="#45aff4"/></svg>
<div class="t" style="left:1779.97px;top:547.44px;font-size:21.01px;line-height:21.01px;color:#fff;">2</div>
<svg class="s" style="left:0.00px;top:0.00px;pointer-events:none" width="2266" height="1342" viewBox="0 0 2266 1342"><path d="M2189.8 1187.4 C2175.8 1187.4 2162.4 1201.9 2148.4 1207.9 C2162.4 1213.9 2175.8 1228.4 2189.8 1228.4 A20.5 20.5 0 0 0 2189.8 1187.4 Z" fill="#45aff4"/></svg>
<div class="t" style="left:2179.47px;top:1198.24px;font-size:21.01px;line-height:21.01px;color:#fff;">3</div>
<svg class="s" style="left:25px;top:118px;" width="30" height="30" viewBox="25 118 30 30"><path d="M29 122.2 H50.5 V143 H32 L29 140 Z" fill="#f0f0f0" stroke="#b3b3b3" stroke-width="1.8" stroke-linejoin="round"/><path d="M34 122.2 V128.5 H45.8 V122.2" fill="none" stroke="#b3b3b3" stroke-width="1.8"/><path d="M34 143 V135.3 H45.8 V143" fill="none" stroke="#b3b3b3" stroke-width="1.8"/></svg>
<svg class="s" style="left:117px;top:118px;" width="31" height="32" viewBox="117 118 31 32"><path d="M120.5 133 Q132.0 121 143.5 133" fill="none" stroke="#b3b3b3" stroke-width="1.6"/><path d="M120.5 133 Q132.0 139 135.5 137.5" fill="none" stroke="#b3b3b3" stroke-width="1.6"/><circle cx="131.0" cy="131.8" r="3.6" fill="#b3b3b3"/><circle cx="129.8" cy="130.6" r="1.1" fill="#fff"/><path d="M134.5 136 L143.5 145 M143.5 136 L134.5 145" stroke="#b3b3b3" stroke-width="1.6"/></svg>
<svg class="s" style="left:197px;top:118px;" width="31" height="32" viewBox="197 118 31 32"><path d="M200 133 Q211.5 121 223 133" fill="none" stroke="#b3b3b3" stroke-width="1.6"/><path d="M200 133 Q211.5 139 215 137.5" fill="none" stroke="#b3b3b3" stroke-width="1.6"/><circle cx="210.5" cy="131.8" r="3.6" fill="#b3b3b3"/><circle cx="209.3" cy="130.6" r="1.1" fill="#fff"/><path d="M218.6 133.5 V147.5 M211.6 140.5 H225.6" stroke="#b3b3b3" stroke-width="1.6"/></svg>
<svg class="s" style="left:285px;top:120px;" width="28" height="23" viewBox="285 120 28 23"><rect x="288.6" y="124.6" width="4" height="4" fill="none" stroke="#b3b3b3" stroke-width="1.3"/><path d="M295.4 126.8 H310.6" stroke="#b3b3b3" stroke-width="1.6"/><rect x="288.6" y="130.60000000000002" width="4" height="4" fill="none" stroke="#b3b3b3" stroke-width="1.3"/><path d="M295.4 132.8 H310.6" stroke="#b3b3b3" stroke-width="1.6"/><rect x="288.6" y="136.3" width="4" height="4" fill="none" stroke="#b3b3b3" stroke-width="1.3"/><path d="M295.4 138.5 H310.6" stroke="#b3b3b3" stroke-width="1.6"/></svg>
<svg class="s" style="left:378px;top:80px;" width="14" height="10" viewBox="378 80 14 10"><path d="M380.5 82.5 L385 87 L389.5 82.5" fill="none" stroke="#c2c2c2" stroke-width="1.3"/></svg>
<svg class="s" style="left:430px;top:60px;" width="47" height="46" viewBox="430 60 47 46"><rect x="433" y="62.7" width="40.4" height="40.4" fill="#fafafa" stroke="#3b3b3b" stroke-width="1.7"/><path d="M446.3 63.5 V102.3 M460 63.5 V102.3 M433.8 75.9 H472.6 M433.8 89.7 H472.6" stroke="#8a8580" stroke-width="1.5"/></svg>
<svg class="s" style="left:513px;top:60px;" width="46" height="46" viewBox="513 60 46 46"><rect x="516" y="62.7" width="40" height="40.4" fill="#fafafa" stroke="#3b3b3b" stroke-width="1.7"/><path d="M529.1 63.5 V89.9 M516.8 75.9 H543" stroke="#8a8580" stroke-width="1.5"/><path d="M543 63.5 V102.3 M516.8 89.9 H555.2" stroke="#2b8fd6" stroke-width="1.7"/></svg>
<svg class="s" style="left:599px;top:60px;" width="36" height="46" viewBox="599 60 36 46"><path d="M602 62.8 H620.4 L631.9 74.3 V102.8 H602 Z" fill="#fafafa" stroke="#3b3b3b" stroke-width="1.7" stroke-linejoin="miter"/><path d="M620.4 62.8 V74 H631.9" fill="none" stroke="#3b3b3b" stroke-width="1.7"/><rect x="608.5" y="79.6" width="17.3" height="17" fill="#fafafa" stroke="#3b3b3b" stroke-width="1.6"/><path d="M617.1 80.4 V95.8 M609.3 84.9 H625 M609.3 91 H625" stroke="#8a8580" stroke-width="1.3"/></svg>
<svg class="s" style="left:662px;top:58px;" width="48" height="48" viewBox="662 58 48 48"><path d="M666 73.6 H672.4 M669.2 73.6 V102.6 M666 102.6 H672.4" fill="none" stroke="#a9a9a9" stroke-width="1.5"/><path d="M676.7 61.9 V69 M706.4 61.9 V69 M676.7 65.5 H706.4" fill="none" stroke="#a9a9a9" stroke-width="1.5"/><rect x="677.2" y="73.9" width="28.9" height="28.5" fill="#f1f1f1" stroke="#a9a9a9" stroke-width="1.7"/><rect x="681.3" y="78" width="20.7" height="3.9" fill="#d8d8d8" stroke="#a9a9a9" stroke-width="1.4"/></svg>
<svg class="s" style="left:769px;top:64px;" width="47" height="38" viewBox="769 64 47 38"><rect x="772.1" y="67.1" width="40.6" height="31.5" fill="#fafafa" stroke="#3b3b3b" stroke-width="1.7"/><rect x="772.9" y="73.1" width="11" height="24.7" fill="#84bff0"/><path d="M772.9 73.1 H812" stroke="#3b3b3b" stroke-width="1.6"/><path d="M784.2 73.8 V97.8" stroke="#1f77c8" stroke-width="1.6"/></svg>
<svg class="s" style="left:846.5px;top:74.4px;" width="22.0" height="22.0" viewBox="846.5 74.4 22.0 22.0"><rect x="848.25" y="76.15" width="17.8" height="17.8" rx="3" fill="#f0f0f0" stroke="#c9c9c9" stroke-width="1.5"/><path d="M851.7 85.4 L856.1 88.60000000000001 L862.7 81.7" fill="none" stroke="#c4c4c4" stroke-width="1.5"/></svg>
<svg class="s" style="left:846.5px;top:122.7px;" width="22.0" height="21.999999999999986" viewBox="846.5 122.7 22.0 21.999999999999986"><rect x="848.25" y="124.45" width="17.8" height="17.8" rx="3" fill="#fff" stroke="#6f6f6f" stroke-width="1.5"/></svg>
<svg class="s" style="left:958.7px;top:74.4px;" width="22.0" height="22.0" viewBox="958.7 74.4 22.0 22.0"><rect x="960.45" y="76.15" width="17.8" height="17.8" rx="3" fill="#fff" stroke="#6f6f6f" stroke-width="1.5"/><path d="M963.9000000000001 85.4 L968.3000000000001 88.60000000000001 L974.9000000000001 81.7" fill="none" stroke="#1e1e1e" stroke-width="1.5"/></svg>
<svg class="s" style="left:958.7px;top:122.7px;" width="22.0" height="21.999999999999986" viewBox="958.7 122.7 22.0 21.999999999999986"><rect x="960.45" y="124.45" width="17.8" height="17.8" rx="3" fill="#fff" stroke="#6f6f6f" stroke-width="1.5"/><path d="M963.9000000000001 133.7 L968.3000000000001 136.9 L974.9000000000001 130.0" fill="none" stroke="#1e1e1e" stroke-width="1.5"/></svg>
<svg class="s" style="left:1122px;top:58px;" width="50" height="50" viewBox="1122 58 50 50"><circle cx="1141.4" cy="77.5" r="14.5" fill="#fafafa" stroke="#3b3b3b" stroke-width="1.8"/><path d="M1152.3 88.6 L1168.9 105.2" stroke="#3b3b3b" stroke-width="1.8"/></svg>
<svg class="s" style="left:1193px;top:59px;" width="46" height="50" viewBox="1193 59 46 50"><path d="M1196.9 63 H1214.6 L1225.8 74.2 V102.6 H1196.9 Z" fill="#fafafa" stroke="#3b3b3b" stroke-width="1.6" stroke-linejoin="round"/><path d="M1214.6 63 V74.2 H1225.8" fill="none" stroke="#3b3b3b" stroke-width="1.6"/><rect x="1207.3" y="87.2" width="29.4" height="19.4" fill="#2a8ad4"/><text x="1222" y="103.2" font-family="Liberation Sans" font-size="16.5" fill="#fff" text-anchor="middle" transform="translate(1222 0) scale(0.82 1) translate(-1222 0)">100</text></svg>
<svg class="s" style="left:1262px;top:63px;" width="51" height="46" viewBox="1262 63 51 46"><rect x="1266.2" y="67.3" width="39.4" height="31" fill="#fafafa" stroke="#3b3b3b" stroke-width="1.6"/><rect x="1278.6" y="77.8" width="27" height="20.5" fill="#84bff0" stroke="#1f77c8" stroke-width="1.6"/><path d="M1278.6 68 V77.8 M1292.8 68 V77.8 M1267 77.8 H1278.6 M1267 88.1 H1278.6" stroke="#8a8580" stroke-width="1.4"/><circle cx="1292.8" cy="89.4" r="11.5" fill="#fff"/><path d="M1299.5 96.5 L1309.5 106.5" stroke="#fff" stroke-width="4.5"/><circle cx="1292.8" cy="89.4" r="9.3" fill="#fafafa" stroke="#3b3b3b" stroke-width="1.6"/><path d="M1299.5 96.1 L1309.3 105.9" stroke="#3b3b3b" stroke-width="1.6"/></svg>
<svg class="s" style="left:1360px;top:57px;" width="49" height="44" viewBox="1360 57 49 44"><path d="M1366 74 V98 H1405.6 V67.2 H1387" fill="#fafafa" stroke="#3b3b3b" stroke-width="1.6"/><rect x="1387.4" y="67.2" width="18.2" height="6" fill="#c8c6c4" stroke="#3b3b3b" stroke-width="1.4"/><path d="M1373.1 59 V81.7 M1362 70.1 H1384.7" stroke="#4caf62" stroke-width="2"/></svg>
<svg class="s" style="left:1438px;top:60px;" width="47" height="46" viewBox="1438 60 47 46"><rect x="1441.5" y="62.8" width="40.1" height="39.8" fill="#fafafa" stroke="#3b3b3b" stroke-width="1.6"/><rect x="1442.3" y="63.6" width="38.5" height="5.1" fill="#c8c6c4" stroke="#3b3b3b" stroke-width="1.3"/><rect x="1442.3" y="82.4" width="38.5" height="5.6" fill="#c8c6c4" stroke="#3b3b3b" stroke-width="1.3"/></svg>
<svg class="s" style="left:1507px;top:55px;" width="51" height="47" viewBox="1507 55 51 47"><rect x="1514.1" y="67.2" width="39.8" height="31.3" fill="#fafafa" stroke="#3b3b3b" stroke-width="1.6"/><path d="M1540.8 78 V98 M1527.4 88.1 H1553.4" stroke="#8a8580" stroke-width="1.4"/><path d="M1514.1 77.5 V98.5 H1527.4 V77.5 H1553.9 V67.2 H1527.4 V77.5 Z" fill="#84bff0" stroke="#1f77c8" stroke-width="1.7"/><path d="M1514.1 88.1 H1527.4 M1540.8 67.2 V77.5" stroke="#1f77c8" stroke-width="1.6"/><circle cx="1518.6" cy="66.8" r="10.2" fill="#fff"/><path d="M1518.60 66.80 L1518.60 58.60" stroke="#2b8fd6" stroke-width="2"/><path d="M1518.60 61.72 L1520.53 60.19" stroke="#2b8fd6" stroke-width="1.6"/><path d="M1518.60 61.72 L1516.67 60.19" stroke="#2b8fd6" stroke-width="1.6"/><path d="M1518.60 66.80 L1511.50 62.70" stroke="#2b8fd6" stroke-width="2"/><path d="M1514.20 64.26 L1513.84 61.82" stroke="#2b8fd6" stroke-width="1.6"/><path d="M1514.20 64.26 L1511.91 65.16" stroke="#2b8fd6" stroke-width="1.6"/><path d="M1518.60 66.80 L1511.50 70.90" stroke="#2b8fd6" stroke-width="2"/><path d="M1514.20 69.34 L1511.91 68.44" stroke="#2b8fd6" stroke-width="1.6"/><path d="M1514.20 69.34 L1513.84 71.78" stroke="#2b8fd6" stroke-width="1.6"/><path d="M1518.60 66.80 L1518.60 75.00" stroke="#2b8fd6" stroke-width="2"/><path d="M1518.60 71.88 L1516.67 73.41" stroke="#2b8fd6" stroke-width="1.6"/><path d="M1518.60 71.88 L1520.53 73.41" stroke="#2b8fd6" stroke-width="1.6"/><path d="M1518.60 66.80 L1525.70 70.90" stroke="#2b8fd6" stroke-width="2"/><path d="M1523.00 69.34 L1523.36 71.78" stroke="#2b8fd6" stroke-width="1.6"/><path d="M1523.00 69.34 L1525.29 68.44" stroke="#2b8fd6" stroke-width="1.6"/><path d="M1518.60 66.80 L1525.70 62.70" stroke="#2b8fd6" stroke-width="2"/><path d="M1523.00 64.26 L1525.29 65.16" stroke="#2b8fd6" stroke-width="1.6"/><path d="M1523.00 64.26 L1523.36 61.82" stroke="#2b8fd6" stroke-width="1.6"/></svg>
<svg class="s" style="left:1577px;top:60px;" width="28" height="26" viewBox="1577 60 28 26"><rect x="1579.9" y="63" width="22.1" height="19.3" fill="#fafafa" stroke="#3b3b3b" stroke-width="1.6"/><rect x="1580.7" y="63.8" width="20.5" height="2.8" fill="#bdbab7"/><path d="M1580.7 66.6 H1601.2" stroke="#3b3b3b" stroke-width="1.2"/><path d="M1580.7 73.2 H1601.2" stroke="#8a8580" stroke-width="1.4"/></svg>
<svg class="s" style="left:1577px;top:99px;" width="28" height="26" viewBox="1577 99 28 26"><rect x="1579.9" y="102.1" width="22.1" height="19.5" fill="#fafafa" stroke="#3b3b3b" stroke-width="1.6"/><path d="M1580.5 121 L1601.5 102.7" stroke="#3b3b3b" stroke-width="1.6"/></svg>
<svg class="s" style="left:1577px;top:138px;" width="28" height="26" viewBox="1577 138 28 26"><rect x="1579.9" y="141.5" width="22.1" height="19.5" fill="#f0f0f0" stroke="#a8a8a8" stroke-width="1.6"/><rect x="1580.7" y="142.3" width="20.5" height="2.6" fill="#c8c8c8"/><path d="M1580.7 145 H1601.2" stroke="#a8a8a8" stroke-width="1.2"/></svg>
<svg class="s" style="left:1702px;top:63px;" width="28" height="20" viewBox="1702 63 28 20"><path d="M1704.9 65.9 H1711.1000000000001 L1715.1000000000001 69.9 V79.4 H1704.9 Z" fill="#fafafa" stroke="#3b3b3b" stroke-width="1.6"/><path d="M1711.1000000000001 65.9 V69.9 H1715.1000000000001" fill="none" stroke="#3b3b3b" stroke-width="1.4"/><path d="M1716.9 65.9 H1723.1000000000001 L1727.1000000000001 69.9 V79.4 H1716.9 Z" fill="#fafafa" stroke="#3b3b3b" stroke-width="1.6"/><path d="M1723.1000000000001 65.9 V69.9 H1727.1000000000001" fill="none" stroke="#3b3b3b" stroke-width="1.4"/></svg>
<svg class="s" style="left:1702px;top:98px;" width="28" height="28" viewBox="1702 98 28 28"><path d="M1706 103.6 H1704.6 V116.8 H1706" fill="none" stroke="#a8a8a8" stroke-width="1.4"/><path d="M1709.4 103.6 H1715.6000000000001 L1719.6000000000001 107.6 V116.89999999999999 H1709.4 Z" fill="#f0f0f0" stroke="#a8a8a8" stroke-width="1.6"/><path d="M1715.6000000000001 103.6 V107.6 H1719.6000000000001" fill="none" stroke="#a8a8a8" stroke-width="1.4"/><path d="M1724.3 101.5 V122.8 M1721.2 104.5 L1724.3 101.4 L1727.4 104.5 M1721.2 119.8 L1724.3 122.9 L1727.4 119.8" fill="none" stroke="#a8a8a8" stroke-width="1.3"/></svg>
<svg class="s" style="left:1702px;top:137px;" width="28" height="28" viewBox="1702 137 28 28"><path d="M1704.9 149.4 H1711.1000000000001 L1715.1000000000001 153.4 V162.6 H1704.9 Z" fill="#f0f0f0" stroke="#a8a8a8" stroke-width="1.6"/><path d="M1711.1000000000001 149.4 V153.4 H1715.1000000000001" fill="none" stroke="#a8a8a8" stroke-width="1.4"/><path d="M1716.9 149.4 H1723.1000000000001 L1727.1000000000001 153.4 V162.6 H1716.9 Z" fill="#f0f0f0" stroke="#a8a8a8" stroke-width="1.6"/><path d="M1723.1000000000001 149.4 V153.4 H1727.1000000000001" fill="none" stroke="#a8a8a8" stroke-width="1.4"/><path d="M1714.5 147 Q1713 141.5 1706 141.8 M1708.8 139 L1705.6 141.8 L1708.8 144.8" fill="none" stroke="#a8a8a8" stroke-width="1.4"/></svg>
<svg class="s" style="left:1970px;top:58px;" width="53" height="52" viewBox="1970 58 53 52"><path d="M1977.9 78.6 V62.7 H2010 V75" fill="#fafafa" stroke="#3b3b3b" stroke-width="1.6"/><rect x="1978.7" y="63.5" width="30.5" height="3.4" fill="#c8c6c4"/><path d="M1978.7 67.4 H2009.2" stroke="#3b3b3b" stroke-width="1.4"/><path d="M1987.4 88.1 V77.8 H2018.9 V102.8 H1992.2" fill="#fafafa" stroke="#3b3b3b" stroke-width="1.6"/><rect x="1988.2" y="78.6" width="29.9" height="3.4" fill="#c8c6c4"/><path d="M1988.2 82.5 H2018.1" stroke="#3b3b3b" stroke-width="1.4"/><path d="M1981.8 80.9 A9 9 0 0 0 1983.5 98.7 L1993.6 98.5" fill="none" stroke="#2e8ad8" stroke-width="1.8"/><path d="M1985.6 91.3 L1993.8 98.6 L1985.6 106" fill="none" stroke="#2e8ad8" stroke-width="1.8"/></svg>
<svg class="s" style="left:2080px;top:60px;" width="52" height="50" viewBox="2080 60 52 50"><path d="M2108 101.8 H2084.7 V64.3 H2124.8 V81" fill="#fafafa" stroke="#3b3b3b" stroke-width="1.6"/><path d="M2085.5 69.9 H2124" stroke="#3b3b3b" stroke-width="1.6"/><path d="M2090.2 75.8 H2092 M2096.8 75.8 H2104.5 M2108 75.8 H2119.6 M2090.2 81.8 H2092 M2096.8 81.8 H2109.6 M2090.2 87.9 H2092 M2096.8 87.9 H2104.5 M2090.2 93.8 H2092 M2096.8 93.8 H2106" stroke="#777" stroke-width="1.5"/><path d="M2108.8 101.8 V85 H2126 Q2128.2 85 2128.2 87.5 V89.6 H2123.8 V103.8 Q2123.8 105.7 2121.5 105.7 H2107.5 Q2105.4 105.7 2105.4 103.5 V101.8 H2118.5 V105.5" fill="#fafafa" stroke="#e3434b" stroke-width="1.6" stroke-linejoin="round"/><path d="M2123.8 85 V89.6" stroke="#e3434b" stroke-width="1.4"/></svg>
<svg class="s" style="left:1555px;top:142px;" width="11" height="9" viewBox="1555 142 11 9"><path d="M1557.2 144.0 L1560.5 148.39999999999998 L1563.8 144.0" fill="none" stroke="#424242" stroke-width="1.4"/></svg>
<svg class="s" style="left:2031px;top:142px;" width="12" height="9" viewBox="2031 142 12 9"><path d="M2033.7 144.3 L2037 148.7 L2040.3 144.3" fill="none" stroke="#424242" stroke-width="1.4"/></svg>
<svg class="s" style="left:2098px;top:143px;" width="12" height="9" viewBox="2098 143 12 9"><path d="M2100.5 145.4 L2103.8 149.79999999999998 L2107.1000000000004 145.4" fill="none" stroke="#424242" stroke-width="1.4"/></svg>
<svg class="s" style="left:2228px;top:172px;" width="16" height="13" viewBox="2228 172 16 13"><path d="M2230.0 174.79999999999998 L2235.8 182.4 L2241.6000000000004 174.79999999999998" fill="none" stroke="#242424" stroke-width="1.8"/></svg>
<svg class="s" style="left:1984px;top:14px;" width="22" height="22" viewBox="1984 14 22 22"><path d="M1987 17.6 H2002.5 V29.4 H1993.3 L1989 33.5 V29.4 H1987 Z" fill="none" stroke="#333" stroke-width="1.4" stroke-linejoin="round"/></svg>
<svg class="s" style="left:2141px;top:14px;" width="22" height="22" viewBox="2141 14 22 22"><path d="M2150 19.6 H2143.8 V33.5 H2157.5 V29" fill="none" stroke="#fff" stroke-width="1.5"/><path d="M2147.5 29.5 Q2148 22 2156.5 21.8 V18.2 L2161.8 23.6 L2156.5 28.7 V25.2 Q2150.5 25.2 2147.5 29.5 Z" fill="none" stroke="#fff" stroke-width="1.4" stroke-linejoin="round"/></svg>
<svg class="s" style="left:2231px;top:20px;" width="13" height="11" viewBox="2231 20 13 11"><path d="M2233.3 22.9 L2237.5 28.1 L2241.7 22.9" fill="none" stroke="#fff" stroke-width="1.6"/></svg>
<svg class="s" style="left:134px;top:224px;" width="16" height="11" viewBox="134 224 16 11"><path d="M136.7 226.3 L142 232.7 L147.3 226.3" fill="none" stroke="#242424" stroke-width="2"/></svg>
<svg class="s" style="left:170px;top:219px;" width="7" height="21" viewBox="170 219 7 21"><rect x="171.1" y="220.5" width="3" height="3" fill="#424242"/><rect x="171.1" y="227" width="3" height="3" fill="#424242"/><rect x="171.1" y="233.5" width="3" height="3" fill="#424242"/></svg>
<svg class="s" style="left:196px;top:217px;" width="22" height="23" viewBox="196 217 22 23"><path d="M198.4 220 L215.6 237.2 M215.6 220 L198.4 237.2" stroke="#9a9a9a" stroke-width="1.5"/></svg>
<svg class="s" style="left:229px;top:217px;" width="29" height="23" viewBox="229 217 29 23"><path d="M231.3 230 L237.8 236.3 L255.3 219.6" fill="none" stroke="#9a9a9a" stroke-width="1.5"/></svg>
<div class="t" style="left:268.39px;top:218.11px;font-size:22.46px;line-height:22.46px;color:#333;font-family:'Liberation Serif';font-style:italic;transform:scaleX(1.3892);">fx</div>
<svg class="s" style="left:2235px;top:222px;" width="16" height="12" viewBox="2235 222 16 12"><path d="M2237.2 224.0 L2243 231.0 L2248.8 224.0" fill="none" stroke="#242424" stroke-width="2"/></svg>
<svg class="s" style="left:2120px;top:342px;" width="23" height="29" viewBox="2120 342 23 29"><rect x="2123.5" y="348" width="16.3" height="19.6" rx="2.2" fill="none" stroke="#1f3a52" stroke-width="1.5"/><circle cx="2131.5" cy="346.3" r="2" fill="none" stroke="#1f3a52" stroke-width="1.4"/><path d="M2127.5 349.4 H2135.6" stroke="#1f3a52" stroke-width="1.9"/><path d="M2126.3 355 L2128 356.8 L2131.2 353.3 M2131.8 356.3 H2135.5 M2130.8 360.9 H2135.5" fill="none" stroke="#1f3a52" stroke-width="1.3"/><circle cx="2127.6" cy="360.9" r="0.9" fill="#1f3a52"/></svg>
<div class="r" style="left:2154.40px;top:335.10px;width:44.70px;height:42.30px;background:#66727e;border-radius:8px"></div>
<svg class="s" style="left:2160px;top:342px;" width="32" height="27" viewBox="2160 342 32 27"><path d="M2165 347.2 L2167.8 350.6 L2171.8 345.6 M2165 355 L2167.8 358.4 L2171.8 353.4" fill="none" stroke="#1f3a52" stroke-width="1.7"/><circle cx="2167.6" cy="364" r="1.3" fill="#1f3a52"/><path d="M2173.8 348.6 H2188.8 M2173.8 356.3 H2188.8 M2173.8 364 H2188.8" stroke="#1f3a52" stroke-width="1.8"/></svg>
<svg class="s" style="left:1784px;top:339px;" width="42" height="32" viewBox="1784 339 42 32"><defs><linearGradient id="lg1" x1="0" y1="0" x2="1" y2="0"><stop offset="0" stop-color="#77703e"/><stop offset="0.5" stop-color="#45606a"/><stop offset="1" stop-color="#1d568f"/></linearGradient><linearGradient id="lg2" x1="1" y1="0" x2="0" y2="0"><stop offset="0" stop-color="#1a4f92"/><stop offset="0.6" stop-color="#3a3f78"/><stop offset="1" stop-color="#6e2f62"/></linearGradient><linearGradient id="lg3" x1="0" y1="1" x2="1" y2="0"><stop offset="0" stop-color="#8a4048"/><stop offset="0.4" stop-color="#8e3a58"/><stop offset="0.75" stop-color="#8e5a40"/><stop offset="1" stop-color="#8a7038"/></linearGradient></defs><path d="M1795.3 346.6 Q1800 342 1804.5 342.5 Q1812 343 1816 351.3" fill="none" stroke="url(#lg1)" stroke-width="1.9" stroke-linecap="round"/><path d="M1818.3 352 Q1823.2 355 1822.4 360.5 Q1821.5 366.5 1815 366.8 L1801 366.6 Q1794 366 1793.9 357" fill="none" stroke="url(#lg2)" stroke-width="1.9" stroke-linecap="round"/><path d="M1792.2 356.8 L1793.9 353.3 L1795.6 356.8 Z" fill="#7a2a50"/><path d="M1796 367.4 Q1787.5 366 1787.4 358.3 Q1787.8 348.6 1795.5 348.3 Q1801.5 348.3 1805.8 355 Q1809 351 1813.7 351.3" fill="none" stroke="url(#lg3)" stroke-width="1.9" stroke-linecap="round"/></svg>
<div class="r" style="left:1780.50px;top:1260.00px;width:1.00px;height:14.00px;background:#7d8790"></div>
<svg class="s" style="left:1803px;top:1266px;" width="17" height="9" viewBox="1803 1266 17 9"><path d="M1805.5 1268.5 L1811.5 1273 L1817.5 1268.5" fill="none" stroke="#1c3247" stroke-width="1.5"/></svg>
<div class="r" style="left:1765px;top:1259px;width:440px;height:14.8px;overflow:hidden"><div class="t" style="left:67.95px;top:4.71px;font-size:20.58px;line-height:20.58px;color:#1c3247;transform:scaleX(0.9258);">Customers</div></div>
<svg class="s" style="left:2152px;top:1260px;" width="43" height="14" viewBox="2152 1260 43 14"><path d="M2154.5 1262.5 H2170.5 L2164.5 1269.5 V1276 M2154.5 1262.5 L2160.5 1269.5 V1276" fill="none" stroke="#1c3247" stroke-width="1.4" stroke-linejoin="round"/><circle cx="2177" cy="1272.5" r="1.1" fill="#1c3247"/><circle cx="2182" cy="1272.5" r="1.1" fill="#1c3247"/><circle cx="2187" cy="1272.5" r="1.1" fill="#1c3247"/></svg>
<div class="r" style="left:2212.30px;top:1259.00px;width:9.30px;height:14.50px;background:#56636e"></div>
<svg class="s" style="left:2181px;top:1274px;" width="27" height="27" viewBox="2181 1274 27 27"><circle cx="2194.2" cy="1284" r="5.8" fill="none" stroke="#1c3247" stroke-width="1.5"/><path d="M2186.5 1282.5 Q2187 1276 2194.2 1276 Q2201.5 1276 2202 1282.5" fill="none" stroke="#1c3247" stroke-width="1.5"/><path d="M2185 1298 Q2185 1291.5 2191 1291 H2197.5 Q2203.5 1291.5 2203.5 1298 Z" fill="none" stroke="#1c3247" stroke-width="1.5"/></svg>
<svg class="s" style="left:2215px;top:1277px;" width="29" height="23" viewBox="2215 1277 29 23"><path d="M2227 1280.6 H2218.8 V1295.5 H2227" fill="none" stroke="#1c3247" stroke-width="1.5"/><path d="M2223.5 1285.3 H2231 V1281.2 L2240 1288 L2231 1294.8 V1290.7 H2223.5 Z" fill="none" stroke="#1c3247" stroke-width="1.5" stroke-linejoin="round"/></svg></body></html>
